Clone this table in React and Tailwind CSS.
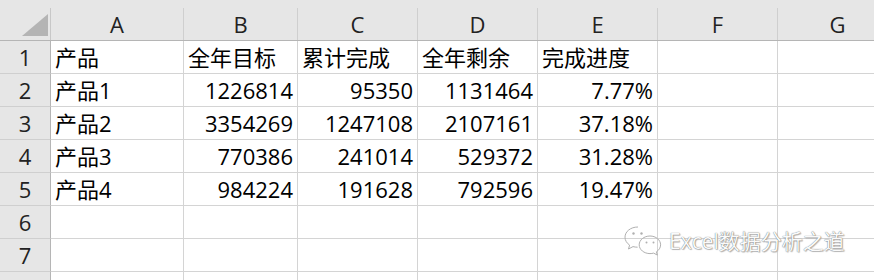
import React from 'react';

const cols = [
  { key: 'A', w: 'w-[133px]' },
  { key: 'B', w: 'w-[114px]' },
  { key: 'C', w: 'w-[120px]' },
  { key: 'D', w: 'w-[120px]' },
  { key: 'E', w: 'w-[120px]' },
  { key: 'F', w: 'w-[120px]' },
  { key: 'G', w: 'w-[120px]' },
];

const rows = [
  ['产品', '全年目标', '累计完成', '全年剩余', '完成进度'],
  ['产品1', '1226814', '95350', '1131464', '7.77%'],
  ['产品2', '3354269', '1247108', '2107161', '37.18%'],
  ['产品3', '770386', '241014', '529372', '31.28%'],
  ['产品4', '984224', '191628', '792596', '19.47%'],
  [],
  [],
  [],
];

const WeChatIcon = () => (
  <svg width="40" height="32" viewBox="0 0 40 32" fill="none" stroke="#b0b0b0" strokeWidth="1">
    <path d="M15 2C7.5 2 2 6.6 2 12.2c0 3.2 1.8 6 4.6 7.9L5.5 24l4.5-2.4c1.5.4 3 .6 4.6.6" />
    <path d="M27 11c-6 0-10.8 4-10.8 8.8S21 28.6 27 28.6c1.3 0 2.5-.2 3.6-.5l3.8 2-1-3.3c2.5-1.6 4.2-4.1 4.2-7 0-4.8-4.8-8.8-10.6-8.8z" />
    <circle cx="10.5" cy="8.5" r="1.2" fill="#b0b0b0" stroke="none" />
    <circle cx="18.5" cy="8.5" r="1.2" fill="#b0b0b0" stroke="none" />
    <circle cx="23.5" cy="17.5" r="1" fill="#b0b0b0" stroke="none" />
    <circle cx="30.5" cy="17.5" r="1" fill="#b0b0b0" stroke="none" />
  </svg>
);

const App = () => {
  return (
    <div className="relative w-[874px] h-[280px] overflow-hidden bg-white text-black font-['Open_Sans','Noto_Sans_CJK_SC',sans-serif]">
      {/* column headers */}
      <div className="flex h-[41px] pt-[8px] bg-[#e6e6e6] border-b border-[#b5b5b5] w-max">
        <div className="relative w-[51px] h-[32px] border-r border-[#c8c8c8]">
          <div className="absolute right-[2px] bottom-[4px] w-0 h-0 border-l-[26px] border-l-transparent border-b-[22px] border-b-[#b4b4b4]" />
        </div>
        {cols.map((c) => (
          <div
            key={c.key}
            className={`${c.w} h-[32px] border-r border-[#cfcfcf] flex items-center justify-center text-[22px] leading-none text-[#222]`}
          >
            {c.key}
          </div>
        ))}
      </div>

      {rows.map((r, i) => (
        <div key={i} className="flex h-[33px] w-max">
          <div className="w-[51px] h-[33px] bg-[#e6e6e6] border-r border-b border-r-[#b5b5b5] border-b-[#cfcfcf] flex items-center justify-center text-[22px] leading-none text-[#222]">
            {i + 1}
          </div>
          {cols.map((c, j) => {
            const v = r[j];
            const right = i > 0 && j > 0;
            return (
              <div
                key={c.key}
                className={`${c.w} h-[33px] border-r border-b border-[#d4d4d4] flex items-center px-[4px] text-[22px] leading-none whitespace-nowrap ${right ? 'justify-end' : 'justify-start'}`}
              >
                {v}
              </div>
            );
          })}
        </div>
      ))}

      {/* watermark */}
      <div className="absolute left-[623px] top-[225px] flex items-center gap-[6px]">
        <WeChatIcon />
        <span className="text-[21px] leading-none text-[#fafafa] [text-shadow:0_0_1px_#4f4f4f,1px_1px_1px_#bdbdbd]">
          Excel数据分析之道
        </span>
      </div>
    </div>
  );
};

export default App;
